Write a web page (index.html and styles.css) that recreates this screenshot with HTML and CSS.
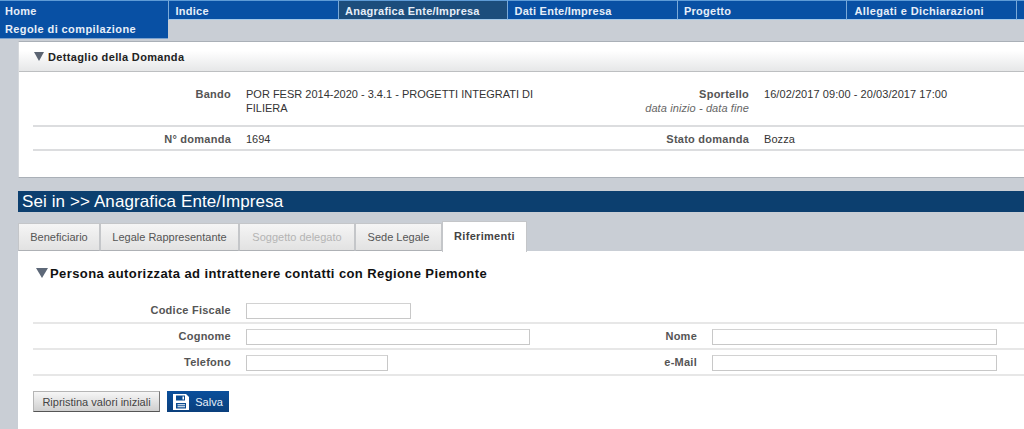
FILE: index.html
```html
<!DOCTYPE html>
<html lang="it">
<head>
<meta charset="utf-8">
<title>Anagrafica Ente/Impresa</title>
<link rel="stylesheet" href="styles.css">
</head>
<body>
<nav class="nav">
  <a class="nav-item nav-first">Home</a>
  <a class="nav-item">Indice</a>
  <a class="nav-item nav-active">Anagrafica Ente/Impresa</a>
  <a class="nav-item">Dati Ente/Impresa</a>
  <a class="nav-item">Progetto</a>
  <a class="nav-item nav-wide">Allegati e Dichiarazioni</a>
  <a class="nav-item nav-stub"></a>
  <a class="nav-item nav-first nav-second">Regole di compilazione</a>
</nav>
<main class="main">
  <section class="detail">
    <h2 class="detail-head"><span class="tri tri-dark"></span>Dettaglio della Domanda</h2>
    <div class="info-row info-row-tall">
      <div class="info-label">Bando</div>
      <div class="info-value info-value-wrap">POR FESR 2014-2020 - 3.4.1 - PROGETTI INTEGRATI DI FILIERA</div>
      <div class="info-label info-label-right">Sportello<em class="info-hint">data inizio - data fine</em></div>
      <div class="info-value">16/02/2017 09:00 - 20/03/2017 17:00</div>
    </div>
    <div class="info-row info-row-short">
      <div class="info-label">N° domanda</div>
      <div class="info-value info-value-wrap">1694</div>
      <div class="info-label info-label-right">Stato domanda</div>
      <div class="info-value">Bozza</div>
    </div>
  </section>
  <div class="crumb">Sei in &gt;&gt; Anagrafica Ente/Impresa</div>
  <div class="tabs">
    <a class="tab tab-1">Beneficiario</a>
    <a class="tab tab-2">Legale Rappresentante</a>
    <a class="tab tab-3 tab-disabled">Soggetto delegato</a>
    <a class="tab tab-4">Sede Legale</a>
    <a class="tab tab-5 tab-active">Riferimenti</a>
  </div>
  <section class="panel">
    <h3 class="panel-title"><span class="tri tri-blue"></span>Persona autorizzata ad intrattenere contatti con Regione Piemonte</h3>
    <div class="form-row form-row-first">
      <label class="form-label">Codice Fiscale</label>
      <input class="input input-cf" type="text">
    </div>
    <div class="form-row">
      <label class="form-label">Cognome</label>
      <input class="input input-cognome" type="text">
      <label class="form-label form-label-right">Nome</label>
      <input class="input input-long" type="text">
    </div>
    <div class="form-row">
      <label class="form-label">Telefono</label>
      <input class="input input-tel" type="text">
      <label class="form-label form-label-right form-label-after-tel">e-Mail</label>
      <input class="input input-long" type="text">
    </div>
    <div class="actions">
      <button class="btn btn-reset" type="button">Ripristina valori iniziali</button>
      <button class="btn btn-save" type="button">
        <svg class="save-icon" width="16" height="16" viewBox="0 0 16 16" aria-hidden="true">
          <path fill="#fff" d="M0 0h13l3 3v13H0z"/>
          <path fill="#0a4a8f" d="M3 1.5h9v5H3zM3 9h10v5.5H3z"/>
          <path fill="#fff" d="M9.5 2.5h1.500v3H9.500zM4.500 10.200h7.500v1H4.500zM4.500 12.300h7.500v1H4.500z"/>
        </svg>Salva</button>
    </div>
  </section>
</main>
</body>
</html>
```
FILE: styles.css
```css
* { box-sizing: border-box; }
html, body { margin: 0; height: 100%; overflow: hidden; }
body {
  display: flex;
  flex-direction: column;
  background: #c9ced5;
  font-family: "Liberation Sans", Arial, sans-serif;
  font-size: 11px;
  color: #333;
}
.nav {
  display: flex;
  flex-wrap: wrap;
  height: 38px;
  flex: none;
}
.nav-item {
  width: 169.5px;
  height: 20px;
  padding: 3px 0 0 6.500px;
  background: #0850a4;
  border-top: 1px solid #5e9bd6;
  border-left: 1px solid #7aa9d8;
  border-bottom: 1px solid #a5c8e8;
  color: #e6eef8;
  font-weight: bold;
  font-size: 11px;
  letter-spacing: 0.25px;
  line-height: 15px;
}
.nav-first {
  width: 168px;
  padding-left: 5px;
  border-left: 0;
  border-bottom: 0;
}
.nav-wide { padding-left: 7.500px; letter-spacing: 0.38px; }
.nav-active { background: #1c4d7c; }
.nav-stub { width: 8.500px; padding: 0; }
.nav-second {
  height: 18px;
  border-top: 0;
  padding-top: 2px;
  border-bottom: 0;
  letter-spacing: 0.4px;
  box-shadow: 0 1px 0 #7aa2d0;
}
.main {
  flex: 1;
  display: flex;
  flex-direction: column;
  padding: 3px 0 0 18px;
  min-height: 0;
}
.detail {
  flex: none;
  height: 137px;
  background: #fff;
  border-top: 1px solid #aab0b7;
  border-bottom: 1px solid #aab0b7;
  border-left: 1px solid #d5d8dc;
}
.detail-head {
  margin: 0;
  height: 30px;
  display: flex;
  align-items: center;
  padding-left: 15px;
  background: linear-gradient(#fff 30%, #e6e7e8);
  border-bottom: 1px solid #bdbfc1;
  font-size: 11px;
  letter-spacing: 0.35px;
  color: #222;
}
.tri {
  flex: none;
  width: 0;
  height: 0;
  border-style: solid;
  border-color: #5b6472 transparent transparent;
}
.tri-dark { border-width: 9px 5px 0; margin-right: 4px; }
.tri-blue { border-width: 10px 6px 0; margin-right: 2px; border-top-color: #5d6878; }
.info-row {
  display: flex;
  margin-left: 14px;
  border-bottom: 2px solid #dcdddf;
}
.info-row-tall { height: 55px; padding-top: 15px; }
.info-row-short { height: 24px; padding-top: 5px; }
.info-label {
  width: 198px;
  flex: none;
  text-align: right;
  font-weight: bold;
  color: #555;
  letter-spacing: 0.25px;
  line-height: 14px;
}
.info-label-right { width: 207px; }
.info-hint {
  display: block;
  font-weight: normal;
  font-style: italic;
  color: #666;
  letter-spacing: 0.1px;
}
.info-value {
  margin-left: 15px;
  color: #333;
  line-height: 14px;
  font-size: 11px;
  letter-spacing: 0.06px;
}
.info-value-wrap {
  width: 296px;
  flex: none;
  letter-spacing: 0;
}
.crumb {
  flex: none;
  margin-top: 13px;
  height: 21px;
  padding-left: 4px;
  background: #0c3f6f;
  color: #fff;
  font-size: 17px;
  letter-spacing: 0.1px;
  line-height: 22px;
}
.tabs {
  flex: none;
  display: flex;
  align-items: flex-end;
  height: 40px;
  margin-top: -1px;
}
.tab {
  height: 28px;
  display: flex;
  align-items: center;
  justify-content: center;
  background: linear-gradient(#f5f5f5, #e2e2e2);
  border: 1px solid #c4c6c9;
  border-bottom: 1px solid #aeb1b5;
  color: #555;
  font-size: 11px;
}
.tab-1 { width: 82px; }
.tab-2 { width: 139px; }
.tab-3 { width: 116px; }
.tab-4 { width: 87px; }
.tab-5 { width: 85px; }
.tab-disabled { color: #b4b4b4; }
.tab-active {
  height: 31px;
  background: #fff;
  border-bottom: 0;
  color: #444;
  font-weight: bold;
  font-size: 11px;
  letter-spacing: 0.3px;
  margin-bottom: -1px;
  position: relative;
  padding-bottom: 3px;
}
.panel {
  flex: 1;
  background: #fff;
  padding-left: 15px;
  min-height: 0;
}
.panel-title {
  margin: 0;
  height: 51px;
  display: flex;
  align-items: center;
  padding: 0 0 7px 3px;
  font-size: 13px;
  letter-spacing: 0.4px;
  color: #111;
}
.form-row {
  display: flex;
  align-items: center;
  height: 26px;
  padding-top: 1px;
  border-bottom: 2px solid #e7e7e7;
}
.form-row-first { height: 22px; padding: 0 0 2px; }
.form-label {
  width: 198px;
  flex: none;
  text-align: right;
  font-weight: bold;
  color: #555;
  letter-spacing: 0.25px;
  margin-right: 15px;
  margin-bottom: 2px;
}
.form-label-right { width: 167px; }
.form-label-after-tel { width: 309px; }
.input {
  height: 16px;
  flex: none;
  padding: 0;
  background: #fff;
  border: 1px solid #c8c8c8;
  border-top-color: #d2d2d2;
  border-radius: 0;
  outline: 0;
}
.input-cf { width: 165px; }
.input-long { width: 285px; }
.input-cognome { width: 284px; }
.input-tel { width: 142px; }
.actions {
  display: flex;
  gap: 7px;
  margin-top: 15px;
}
.btn {
  height: 21px;
  padding: 0;
  font-family: inherit;
  font-size: 11px;
  border-radius: 0;
  display: flex;
  align-items: center;
  justify-content: center;
}
.btn-reset {
  width: 127px;
  color: #444;
  background: linear-gradient(#f6f6f6, #cfcfcf);
  border: 1px solid #b5b5b5;
  border-bottom-color: #555;
  border-right-color: #777;
}
.btn-save {
  width: 62px;
  gap: 6px;
  color: #e8f0f8;
  background: linear-gradient(#0a4f9c, #0a3f7c);
  border: 0;
}
.save-icon { flex: none; }
```
